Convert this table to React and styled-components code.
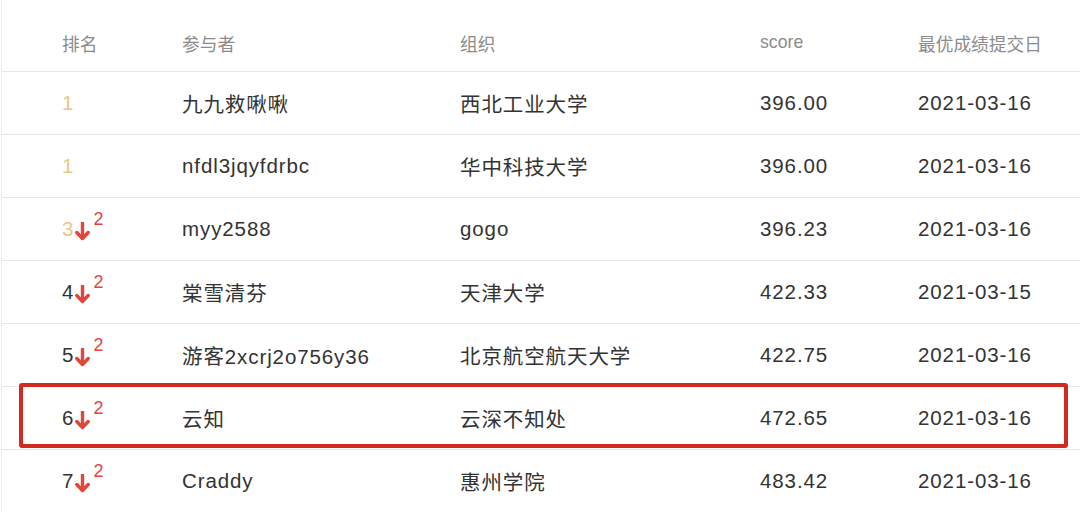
import React from "react";
import styled, { createGlobalStyle } from "styled-components";

const Global = createGlobalStyle`
  html, body { margin: 0; padding: 0; background: #fff; }
  body { font-family: "Liberation Sans", "Noto Sans CJK SC", sans-serif; }
`;

const Table = styled.div`
  width: 1080px;
  height: 512px;
  overflow: hidden;
  background: #fff;
  border-left: 1px solid #ececec;
  margin-left: 1px;
  box-sizing: border-box;
`;

const Grid = styled.div`
  display: grid;
  grid-template-columns: 120px 278px 300px 158px 1fr;
  align-items: center;
  padding-left: 60px;
  box-sizing: border-box;
  border-bottom: 1px solid #e6e6e6;
  position: relative;
`;

const HeadRow = styled(Grid)`
  height: 72px;
  padding-top: 14px;
  color: #8c8c8c;
  font-size: 17.7px;
`;

const BodyRow = styled(Grid)`
  height: 63px;
  color: #333;
  font-size: 20.5px;
  letter-spacing: 0.9px;
  ${(p) =>
    p.$highlight &&
    `
    &::after {
      content: "";
      position: absolute;
      left: 17px;
      right: 13px;
      top: -4px;
      bottom: 1px;
      border: 4px solid #d12a20;
      border-radius: 3px;
      pointer-events: none;
    }
  `}
`;

const Rank = styled.div`
  display: flex;
  align-items: center;
  letter-spacing: 0;
  color: ${(p) => (p.$top ? "#ebc882" : "#333")};
`;

const Drop = styled.span`
  display: inline-flex;
  align-items: flex-start;
  margin-left: 2px;
  color: #e0463a;
`;

const Sup = styled.span`
  font-size: 18px;
  line-height: 18px;
  margin-left: 3px;
  margin-top: -8px;
  color: #e0463a;
`;

const Arrow = () => (
  <svg width="15" height="19" viewBox="0 0 15 19" style={{ marginTop: 4 }}>
    <path d="M7.5 1 V15" stroke="#e0463a" strokeWidth="3.4" strokeLinecap="round" />
    <path d="M1.8 10.5 L7.5 16.5 L13.2 10.5" fill="none" stroke="#e0463a" strokeWidth="3.4" strokeLinecap="round" strokeLinejoin="round" />
  </svg>
);

const rows = [
  { rank: "1", top: true, name: "九九救啾啾", org: "西北工业大学", score: "396.00", date: "2021-03-16" },
  { rank: "1", top: true, name: "nfdl3jqyfdrbc", org: "华中科技大学", score: "396.00", date: "2021-03-16" },
  { rank: "3", top: true, drop: 2, name: "myy2588", org: "gogo", score: "396.23", date: "2021-03-16" },
  { rank: "4", drop: 2, name: "棠雪清芬", org: "天津大学", score: "422.33", date: "2021-03-15" },
  { rank: "5", drop: 2, name: "游客2xcrj2o756y36", org: "北京航空航天大学", score: "422.75", date: "2021-03-16" },
  { rank: "6", drop: 2, name: "云知", org: "云深不知处", score: "472.65", date: "2021-03-16", hl: true },
  { rank: "7", drop: 2, name: "Craddy", org: "惠州学院", score: "483.42", date: "2021-03-16" },
];

export default function App() {
  return (
    <>
      <Global />
      <Table>
        <HeadRow>
          <div>排名</div>
          <div>参与者</div>
          <div>组织</div>
          <div>score</div>
          <div>最优成绩提交日</div>
        </HeadRow>
        {rows.map((r, i) => (
          <BodyRow key={i} $highlight={r.hl}>
            <Rank $top={r.top}>
              {r.rank}
              {r.drop && (
                <Drop>
                  <Arrow />
                  <Sup>{r.drop}</Sup>
                </Drop>
              )}
            </Rank>
            <div>{r.name}</div>
            <div>{r.org}</div>
            <div>{r.score}</div>
            <div>{r.date}</div>
          </BodyRow>
        ))}
      </Table>
    </>
  );
}
